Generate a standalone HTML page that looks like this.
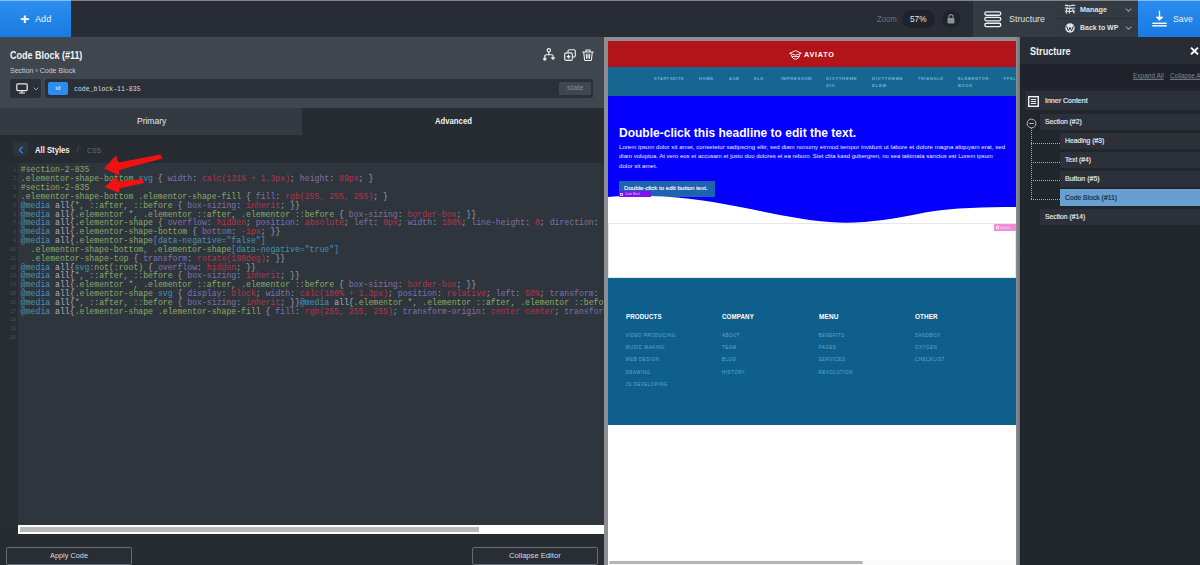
<!DOCTYPE html>
<html><head><meta charset="utf-8">
<style>
*{box-sizing:border-box;margin:0;padding:0}
html,body{width:1200px;height:565px;overflow:hidden;background:#21252c;font-family:"Liberation Sans",sans-serif;color:#fff}
.abs,.t{position:absolute}
.t{white-space:nowrap;line-height:1;transform:translateY(-50%) scaleX(var(--sx,1));transform-origin:left center}
svg{position:absolute;overflow:visible}
#top{position:absolute;left:0;top:0;width:1200px;height:37px;background:#282c34}
#topline{position:absolute;left:0;top:0;width:1200px;height:1px;background:rgba(255,255,255,.42)}
#add{position:absolute;left:0;top:0;width:71px;height:37px;background:linear-gradient(#2d8ff0,#1a7ae0)}
#left{position:absolute;left:0;top:37px;width:604px;height:528px;background:#272b32}
#hdr{position:absolute;left:0;top:0;width:604px;height:70.5px;background:#3f464e}
#tabs{position:absolute;left:0;top:70.5px;width:604px;height:27.2px}
#tabs div{position:absolute;top:0;height:27.2px;width:302px}
#code{position:absolute;left:0;top:126px;width:604px;height:362px;background:#2f353d;overflow:hidden}
#gutter{position:absolute;left:0;top:0;width:18px;height:400px;background:#282c33}
pre{position:absolute;left:20.8px;top:3.4px;font-family:"Liberation Mono",monospace;font-size:8.17px;line-height:8.83px;color:#9ba3ab;white-space:pre}
pre.ln{left:0;width:16px;text-align:right;color:#4d545c;font-size:6px}
.g{color:#8aaa66}.b{color:#4592b5}.p{color:#8070ab}.r{color:#b8334a}.w{color:#a9b0b8}.c{color:#4aa0b8}
#right{position:absolute;left:1020px;top:37px;width:180px;height:528px;background:#21252c}
#prev{position:absolute;left:604px;top:37px;width:416px;height:528px;background:linear-gradient(90deg,#8c8e92 0,#8c8e92 412px,#6c7178 416px)}
#page{position:absolute;left:4px;top:4px;width:408px;height:524px;background:#fff;overflow:hidden}
.btn{position:absolute;height:18px;border:1px solid #676d75;border-radius:2px;background:#292d34}
.row{position:absolute;height:16px;background:#2c3139;right:0}
.lo{font-size:6px;color:#ececff}
.rt{font-size:7.8px;color:#e3e6e9;-webkit-text-stroke:.2px currentColor}
.nav{transform-origin:left center;transform:scaleX(var(--sx,1));font-size:3.9px;font-weight:bold;letter-spacing:.6px;color:#66b8d8;line-height:7px;position:absolute;white-space:nowrap}
.fh{position:absolute;transform-origin:left center;transform:scaleX(var(--sx,1));font-size:6.6px;font-weight:bold;color:#fff;white-space:nowrap;letter-spacing:.1px}
.fl{position:absolute;font-size:4.5px;color:#62abd0;white-space:nowrap;letter-spacing:.5px}
</style></head><body>
<div id="top">
 <div id="add"><span class="t" id="t_plus" style="--sx:1.148;left:20px;top:19px;font-size:14px;font-weight:bold;color:#fff">+</span><span class="t" id="t_add" style="--sx:0.977;left:35px;top:19.3px;font-size:9.4px;color:#e6f0fc">Add</span></div>
 <span class="t" id="t_zoom" style="--sx:0.911;left:877px;top:19px;font-size:8.5px;color:#6c737c">Zoom</span>
 <div class="abs" style="left:902px;top:10px;width:33px;height:18px;border-radius:9px;background:#1f222a"></div>
 <span class="t" id="t_57" style="--sx:0.965;left:910px;top:19.3px;font-size:8.6px;color:#e6e8ea">57%</span>
 <div class="abs" style="left:942px;top:10px;width:18px;height:18px;border-radius:9px;background:#20242b"></div>
 <svg style="left:947px;top:14px" width="8" height="10" viewBox="0 0 8 10"><rect x="0.5" y="4" width="7" height="5.5" rx=".8" fill="#8b9199"/><path d="M2 4V2.6a2 2 0 0 1 4 0V4" fill="none" stroke="#8b9199" stroke-width="1.1"/></svg>
 <div class="abs" style="left:973px;top:1px;width:83px;height:36px;background:#353b43"></div>
 <svg style="left:984px;top:10.5px" width="18" height="17" viewBox="0 0 18 17"><g fill="none" stroke="#eef0f2" stroke-width="1.35"><rect x=".8" y=".8" width="16" height="3.4" rx="1.7"/><rect x=".8" y="6.4" width="16" height="3.4" rx="1.7"/><rect x=".8" y="12.2" width="16" height="3.4" rx="1.7"/></g></svg>
 <span class="t" id="t_struct" style="--sx:0.966;left:1009px;top:19.5px;font-size:9.2px;color:#dde1e5">Structure</span>
 <div class="abs" style="left:1056px;top:1px;width:82px;height:36px;background:#343a42"></div>
 <div class="abs" style="left:1056px;top:18px;width:82px;height:1px;background:#2a2f36"></div>
 <svg style="left:1064px;top:4px" width="12" height="11" viewBox="0 0 12 11"><g fill="none" stroke="#e6e9ec" stroke-width="1.05"><path d="M.8 1.4c2.2-1 3.2.9 5.4.4s2.600-1.200 5-.4"/><path d="M.8 4.300c2.200-1 3.200.9 5.400.4s2.600-1.200 5-.4"/><path d="M.8 7.200c2.200-1 3.200.9 5.400.4s2.600-1.200 5-.4"/><path d="M3.200 2.500L2.200 9.800M6 3l-.8 6.600M8.600 5l1.600 4.600"/></g></svg>
 <span class="t" id="t_manage" style="--sx:0.906;left:1079.7px;top:10.3px;font-size:8px;font-weight:bold;color:#dfe3e7">Manage</span>
 <svg style="left:1124.5px;top:8px" width="7" height="4" viewBox="0 0 7 4"><path d="M.7.6l2.8 2.6L6.3.6" fill="none" stroke="#8f959d" stroke-width="1.1"/></svg>
 <svg style="left:1064.5px;top:23px" width="10" height="10" viewBox="0 0 10 10"><circle cx="5" cy="5" r="4.7" fill="#dfe2e6"/><path d="M1.6 3.2l1.9 4.6L5 4.3l1.5 3.5 1.9-4.6" fill="none" stroke="#343a42" stroke-width="1"/></svg>
 <span class="t" id="t_back" style="--sx:0.870;left:1079.7px;top:28.2px;font-size:8px;font-weight:bold;color:#dfe3e7">Back to WP</span>
 <svg style="left:1124.5px;top:26.3px" width="7" height="4" viewBox="0 0 7 4"><path d="M.7.6l2.8 2.6L6.3.6" fill="none" stroke="#8f959d" stroke-width="1.1"/></svg>
 <div class="abs" style="left:1138px;top:0;width:62px;height:37px;background:linear-gradient(#2b8cf0,#1a7ae0)"></div>
 <svg style="left:1152px;top:10px" width="15" height="17" viewBox="0 0 15 17"><g stroke="#fff" fill="none"><path d="M7.5.6v9" stroke-width="1.3"/><path d="M4 7l3.5 3.6L11 7z" fill="#fff" stroke-width=".6"/><path d="M.3 13.3h14.4" stroke-width="1.4"/><path d="M.3 15.8h14.4" stroke-width="1.4"/></g></svg>
 <span class="t" id="t_save" style="--sx:0.950;left:1172.7px;top:20.1px;font-size:9.2px;color:#e4effc">Save</span>
 <div id="topline"></div>
</div>

<div id="left">
 <div id="hdr">
  <span class="t" id="t_title" style="--sx:0.898;left:10px;top:18.6px;font-size:10px;font-weight:bold;color:#f2f3f4">Code Block (#11)</span>
  <span class="t" id="t_crumb" style="--sx:1.035;left:10px;top:33.6px;font-size:6.8px;color:#c9cdd2">Section › Code Block</span>
  <svg style="left:543px;top:11px" width="13" height="13" viewBox="0 0 13 13"><g fill="none" stroke="#f0f1f2" stroke-width="1.15"><circle cx="5.8" cy="2.3" r="1.7"/><path d="M5.8 4v2.7M1.8 9.6V8a1.3 1.3 0 0 1 1.3-1.3h5.6A1.3 1.3 0 0 1 10 8v2.6M8.2 9.4L10 11.2l1.8-1.8"/><circle cx="1.8" cy="11" r="1.1" fill="#f0f1f2"/></g></svg>
  <svg style="left:564px;top:12px" width="12" height="12" viewBox="0 0 12 12"><g fill="none" stroke="#f0f1f2" stroke-width="1.15"><rect x=".7" y="3.8" width="7.6" height="7.6" rx="1.5"/><path d="M4 3.6V2.2A1.5 1.5 0 0 1 5.5.7h4.3a1.5 1.5 0 0 1 1.5 1.5v4.3A1.5 1.5 0 0 1 9.8 8H8.5"/><path d="M4.5 5.8v3.6M2.7 7.6h3.6" stroke-width="1.3"/></g></svg>
  <svg style="left:582px;top:12px" width="12" height="12" viewBox="0 0 12 12"><g fill="none" stroke="#f0f1f2" stroke-width="1.1"><path d="M.4 3h11.2M4 2.8V1h4v1.8M1.7 3.2l.9 7.6a.8.8 0 0 0 .8.7h5.2a.8.8 0 0 0 .8-.7l.9-7.6M4.3 4.8l.3 4.8M6 4.8v4.8M7.7 4.8l-.3 4.8"/></g></svg>
  <div class="abs" style="left:10px;top:41.5px;width:31px;height:19px;background:#2b3038;border-radius:2px"></div>
  <svg style="left:16px;top:45.6px" width="12" height="11" viewBox="0 0 12 11"><g fill="none" stroke="#eceef0" stroke-width="1.2"><rect x=".8" y=".8" width="10.4" height="6.8" rx="1"/><path d="M3 10h6M6 7.6V10"/></g></svg>
  <svg style="left:32.5px;top:49.6px" width="6" height="4" viewBox="0 0 6 4"><path d="M.6.6L3 2.9 5.4.6" fill="none" stroke="#9aa0a8" stroke-width="1"/></svg>
  <div class="abs" style="left:45px;top:41.5px;width:548px;height:19px;background:#2b3038;border-radius:2px"></div>
  <div class="abs" style="left:48px;top:44.7px;width:20px;height:13px;background:#2c8def;border-radius:2px"></div>
  <span class="t" id="t_id" style="left:55.5px;top:52.4px;font-size:5.5px;font-weight:bold;color:#cfe5fd">id</span>
  <span class="t" id="t_cid" style="--sx:1.021;left:74px;top:53px;font-size:6.4px;color:#d6dadf;font-family:'Liberation Mono',monospace">code_block-11-835</span>
  <div class="abs" style="left:559px;top:44.7px;width:32px;height:13px;background:#3f4852;border-radius:1px"></div>
  <span class="t" id="t_state" style="--sx:1.154;left:567px;top:51.4px;font-size:6.6px;color:#7f8a96">state</span>
 </div>
 <div id="tabs"><div style="left:0;background:#333a42"></div><div style="left:302px;background:#272b32"></div>
  <span class="t" id="t_primary" style="--sx:0.986;left:136.5px;top:13.4px;font-size:8.6px;color:#e8eaec">Primary</span>
  <span class="t" id="t_adv" style="--sx:0.898;left:434.6px;top:13.4px;font-size:8.6px;color:#f1f2f3;font-weight:bold">Advanced</span>
 </div>
 <div class="abs" style="left:13px;top:105px;width:14.5px;height:14px;background:#2e343c;border-radius:2px"></div>
 <svg style="left:17.5px;top:108.5px" width="6" height="8" viewBox="0 0 6 8"><path d="M4.6.8L1.4 4l3.2 3.2" fill="none" stroke="#2f80d6" stroke-width="1.5"/></svg>
 <span class="t" id="t_all" style="--sx:0.938;left:35px;top:113.6px;font-size:8.2px;font-weight:bold;color:#f1f2f3">All Styles</span>
 <span class="t" style="left:76.5px;top:113.6px;font-size:8.2px;color:#4f565e">/</span>
 <span class="t" id="t_css" style="--sx:0.851;left:86.7px;top:113.6px;font-size:8px;color:#68707a">CSS</span>
 <div id="code"><div id="gutter"></div>
<pre class="ln" style="font-size:5px">1
2
3
4
5
6
7
8
9
10
11
12
13
14
15
16
17
18
19
20</pre>
<pre id="src"><span class="g">#section-2-835</span>
<span class="g">.elementor-shape-bottom</span> <span class="b">svg</span> { <span class="p">width</span>: <span class="r">calc(131% + 1.3px)</span>; <span class="p">height</span>: <span class="r">89px</span>; }
<span class="g">#section-2-835</span>
<span class="g">.elementor-shape-bottom .elementor-shape-fill</span> { <span class="p">fill</span>: <span class="r">rgb(255, 255, 255)</span>; }
<span class="b">@media</span> <span class="w">all{</span><span class="g">*, ::after, ::before</span> { <span class="p">box-sizing</span>: <span class="r">inherit</span>; }}
<span class="b">@media</span> <span class="w">all{</span><span class="g">.elementor *, .elementor ::after, .elementor ::before</span> { <span class="p">box-sizing</span>: <span class="r">border-box</span>; }}
<span class="b">@media</span> <span class="w">all{</span><span class="g">.elementor-shape</span> { <span class="p">overflow</span>: <span class="r">hidden</span>; <span class="p">position</span>: <span class="r">absolute</span>; <span class="p">left</span>: <span class="r">0px</span>; <span class="p">width</span>: <span class="r">100%</span>; <span class="p">line-height</span>: <span class="r">0</span>; <span class="p">direction</span>: <span class="r">ltr</span>; }}
<span class="b">@media</span> <span class="w">all{</span><span class="g">.elementor-shape-bottom</span> { <span class="p">bottom</span>: <span class="r">-1px</span>; }}
<span class="b">@media</span> <span class="w">all{</span><span class="g">.elementor-shape</span><span class="b">[data-negative="false"]</span>
  <span class="g">.elementor-shape-bottom, .elementor-shape</span><span class="b">[data-negative="true"]</span>
  <span class="g">.elementor-shape-top</span> { <span class="p">transform</span>: <span class="r">rotate(180deg)</span>; }}
<span class="b">@media</span> <span class="w">all{</span><span class="b">svg</span><span class="g">:not(:root)</span> { <span class="p">overflow</span>: <span class="r">hidden</span>; }}
<span class="b">@media</span> <span class="w">all{</span><span class="g">*, ::after, ::before</span> { <span class="p">box-sizing</span>: <span class="r">inherit</span>; }}
<span class="b">@media</span> <span class="w">all{</span><span class="g">.elementor *, .elementor ::after, .elementor ::before</span> { <span class="p">box-sizing</span>: <span class="r">border-box</span>; }}
<span class="b">@media</span> <span class="w">all{</span><span class="g">.elementor-shape</span> <span class="b">svg</span> { <span class="p">display</span>: <span class="r">block</span>; <span class="p">width</span>: <span class="r">calc(100% + 1.3px)</span>; <span class="p">position</span>: <span class="r">relative</span>; <span class="p">left</span>: <span class="r">50%</span>; <span class="p">transform</span>: <span class="r">translateX(-50%)</span>; }}
<span class="b">@media</span> <span class="w">all{</span><span class="g">*, ::after, ::before</span> { <span class="p">box-sizing</span>: <span class="r">inherit</span>; }}<span class="b">@media</span> <span class="w">all{</span><span class="g">.elementor *, .elementor ::after, .elementor ::before</span> { <span class="p">box-sizing</span>: <span class="r">border-box</span>; }}
<span class="b">@media</span> <span class="w">all{</span><span class="g">.elementor-shape .elementor-shape-fill</span> { <span class="p">fill</span>: <span class="r">rgb(255, 255, 255)</span>; <span class="p">transform-origin</span>: <span class="r">center center</span>; <span class="p">transform</span>: <span class="r">rotateY(0deg)</span>; }}
</pre>
 </div>
 <svg style="left:0;top:0" width="604" height="300" viewBox="0 37 604 300"><g fill="#f01212"><path d="M104 168.4L116 155.5l2.5 7L160.5 154.6l2 4L119 170l.5 5.4z"/><path d="M104.3 186.9L117 176.5l1.5 5L143 179l1 4-24.8 5.6.3 4.4z"/></g></svg>
 <div class="abs" style="left:18px;top:488px;width:586px;height:9px;background:#fff"></div>
 <div class="abs" style="left:20px;top:489.7px;width:459px;height:5.8px;background:#b9b9b9"></div>
 <div class="btn" style="left:6px;top:510px;width:126px"></div>
 <span class="t" id="t_apply" style="--sx:0.994;left:50px;top:519px;font-size:7.4px;color:#d9dce0">Apply Code</span>
 <div class="btn" style="left:472px;top:510px;width:126px"></div>
 <span class="t" id="t_coll" style="--sx:1.031;left:509px;top:519px;font-size:7.4px;color:#d9dce0">Collapse Editor</span>
</div>

<div id="prev"><div id="page">
 <div class="abs" style="left:0;top:0;width:408px;height:26px;background:#b21419"></div>
 <svg style="left:180.5px;top:8.8px" width="13" height="10" viewBox="0 0 13 10"><g fill="none" stroke="#fff" stroke-width=".9"><path d="M6.5.6L12.3 3.4 6.5 5.2.7 3.4z"/><path d="M2.2 4.6C2.6 7.6 4.5 9.2 6.5 9.2s3.9-1.6 4.3-4.6"/><path d="M3 6.6h7"/></g></svg>
 <span class="t" id="t_aviato" style="--sx:1.092;left:196px;top:14.3px;font-size:6.6px;font-weight:bold;letter-spacing:.7px;color:#fff">AVIATO</span>
 <div class="abs" style="left:0;top:26px;width:408px;height:29px;background:#176591"></div>
 <span class="nav" id="n1" style="--sx:1.013;left:46px;top:33.7px">STARTSEITE</span>
 <span class="nav" id="n2" style="--sx:1.065;left:91px;top:33.7px">HOME</span>
 <span class="nav" id="n3" style="--sx:0.995;left:120.6px;top:33.7px">AGB</span>
 <span class="nav" id="n4" style="--sx:1.034;left:145.6px;top:33.7px">ELE ·</span>
 <span class="nav" id="n5" style="--sx:1.077;left:172.8px;top:33.7px">IMPRESSUM</span>
 <span class="nav" id="n6" style="--sx:1.114;left:218px;top:33.7px">DIVYTHEME<br>DIV</span>
 <span class="nav" id="n7" style="--sx:1.114;left:264px;top:33.7px">DIVYTHEME<br>ELEM</span>
 <span class="nav" id="n8" style="--sx:1.037;left:310px;top:33.7px">TRIANGLE</span>
 <span class="nav" id="n9" style="--sx:1.048;left:350px;top:33.7px">ELEMENTOR<br>BOOK</span>
 <span class="nav" id="n10" style="left:395.6px;top:33.7px">PPEL</span>
 <div class="abs" style="left:0;top:55px;width:408px;height:130px;background:#0400fc"></div>
 <span class="t" id="t_head" style="--sx:0.970;left:11px;top:91.8px;font-size:12.4px;font-weight:bold;color:#fff">Double-click this headline to edit the text.</span>
 <span class="t lo" id="l1" style="--sx:1.019;left:11px;top:106.2px">Lorem ipsum dolor sit amet, consetetur sadipscing elitr, sed diam nonumy eirmod tempor invidunt ut labore et dolore magna aliquyam erat, sed</span>
 <span class="t lo" id="l2" style="--sx:0.998;left:11px;top:115.4px">diam voluptua. At vero eos et accusam et justo duo dolores et ea rebum. Stet clita kasd gubergren, no sea takimata sanctus est Lorem ipsum</span>
 <span class="t lo" id="l3" style="--sx:1.019;left:11px;top:124.7px">dolor sit amet.</span>
 <div class="abs" style="left:11px;top:140px;width:95.5px;height:15.6px;background:#1e62b0"></div>
 <span class="t" id="t_btn" style="--sx:1.020;left:16px;top:146.9px;font-size:6px;color:#fff;-webkit-text-stroke:.12px #fff">Double-click to edit button text.</span>
 <svg style="left:0;top:150px" width="408" height="40" viewBox="608 191 408 40"><path d="M608 196.9C622 195.6 640 195.2 664 196.6C700 198.8 730 205 770 213C800 219 825 222.8 846 222.8C870 222.8 895 218.5 925 212.5C955 207.5 985 207 1016 207V232H608z" fill="#fff"/></svg>
 <div class="abs" style="left:11px;top:150.4px;width:31.5px;height:5.2px;background:#7d10ee"></div>
 <span class="t" id="t_cb" style="left:17px;top:152.9px;font-size:2.8px;color:#e9d4ff;letter-spacing:.1px">Code Block</span>
 <div class="abs" style="left:12.4px;top:151.5px;width:3px;height:3px;border:.5px solid #d9b5ff"></div>
 <div class="abs" style="left:0;top:182px;width:408px;height:54.6px;border:1px solid #e6e6e6"></div>
 <div class="abs" style="left:386px;top:183px;width:22px;height:7px;background:#ee8fd8"></div>
 <span class="t" id="t_sec" style="left:392.5px;top:186.6px;font-size:2.8px;color:#fde8f8">Section</span>
 <div class="abs" style="left:387.6px;top:185px;width:3px;height:3px;border:.5px solid #fde8f8"></div>
 <div class="abs" style="left:0;top:236.6px;width:408px;height:147.4px;background:#0f5f8c"></div>
 <span class="fh" id="f1" style="--sx:0.944;left:17.5px;top:271.6px">PRODUCTS</span>
 <span class="fh" id="f2" style="--sx:0.940;left:114px;top:271.6px">COMPANY</span>
 <span class="fh" id="f3" style="--sx:0.983;left:210.5px;top:271.6px">MENU</span>
 <span class="fh" id="f4" style="--sx:0.963;left:307px;top:271.6px">OTHER</span>
 <span class="fl" style="left:17.5px;top:291.6px">VIDEO PRODUCING</span>
 <span class="fl" style="left:17.5px;top:304.0px">MUSIC MAKING</span>
 <span class="fl" style="left:17.5px;top:316.4px">WEB DESIGN</span>
 <span class="fl" style="left:17.5px;top:328.8px">DRAWING</span>
 <span class="fl" style="left:17.5px;top:341.2px">JS DEVELOPING</span>
 <span class="fl" style="left:114px;top:291.6px">ABOUT</span>
 <span class="fl" style="left:114px;top:304.0px">TEAM</span>
 <span class="fl" style="left:114px;top:316.4px">BLOG</span>
 <span class="fl" style="left:114px;top:328.8px">HISTORY</span>
 <span class="fl" style="left:210.5px;top:291.6px">BENEFITS</span>
 <span class="fl" style="left:210.5px;top:304.0px">PAGES</span>
 <span class="fl" style="left:210.5px;top:316.4px">SERVICES</span>
 <span class="fl" style="left:210.5px;top:328.8px">REVOLUTION</span>
 <span class="fl" style="left:307px;top:291.6px">SANDBOX</span>
 <span class="fl" style="left:307px;top:304.0px">OXYGEN</span>
 <span class="fl" style="left:307px;top:316.4px">CHECKLIST</span>
 <div class="abs" style="left:0;top:519px;width:408px;height:5px;background:#fbfbfb"></div>
 <div class="abs" style="left:1px;top:520px;width:254px;height:3px;background:#b5b5b5;border-radius:1.5px"></div>
</div></div>

<div id="right">
 <div class="abs" style="left:0;top:0;width:180px;height:27px;background:#282c34"></div>
 <span class="t" id="t_struct2" style="--sx:0.877;left:9.5px;top:14.6px;font-size:10.4px;font-weight:bold;color:#f1f2f3">Structure</span>
 <svg style="left:169.5px;top:10px" width="9" height="8" viewBox="0 0 9 8"><path d="M1 .6l7 6.8M8 .6L1 7.4" stroke="#fff" stroke-width="2" fill="none"/></svg>
 <div class="abs" style="left:0;top:27px;width:180px;height:24px;background:#1f222a"></div>
 <span class="t" id="t_exp" style="--sx:1.016;left:113px;top:39px;font-size:6.4px;color:#7f868f;text-decoration:underline">Expand All</span>
 <span class="t" id="t_col" style="left:150px;top:39px;font-size:6.4px;color:#7f868f;text-decoration:underline">Collapse All</span>
 <div class="row" style="left:5px;top:54px;height:19px"></div>
 <svg style="left:8px;top:59px" width="11" height="11" viewBox="0 0 11 11"><g fill="none" stroke="#f0f1f2"><rect x=".7" y=".7" width="9.6" height="9.6" stroke-width="1.4"/><path d="M2.8 3.5h5.4M2.8 5.5h5.4M2.8 7.5h5.4" stroke-width="1"/></g></svg>
 <span class="t rt" id="r0" style="--sx:0.902;left:25.4px;top:64px">Inner Content</span>
 <svg style="left:5.5px;top:80.5px" width="11" height="11" viewBox="0 0 11 11"><circle cx="5.5" cy="5.5" r="4.4" fill="#21252c" stroke="#b9bdc2" stroke-width="1"/><path d="M3.2 5.5h4.6" stroke="#b9bdc2" stroke-width="1"/></svg>
 <div class="abs" style="left:10.5px;top:91px;width:0;height:71px;border-left:1px dotted #a9adb3"></div>
 <div class="abs" style="left:11px;top:105.5px;width:29px;height:0;border-top:1px dotted #a9adb3"></div>
 <div class="abs" style="left:11px;top:124.5px;width:29px;height:0;border-top:1px dotted #a9adb3"></div>
 <div class="abs" style="left:11px;top:142.5px;width:29px;height:0;border-top:1px dotted #a9adb3"></div>
 <div class="abs" style="left:11px;top:161.5px;width:29px;height:0;border-top:1px dotted #a9adb3"></div>
 <div class="row" style="left:20px;top:77px"></div><span class="t rt" id="r1" style="--sx:0.873;left:25px;top:85.3px">Section (#2)</span>
 <div class="row" style="left:40px;top:96px"></div><span class="t rt" id="r2" style="--sx:0.872;left:45px;top:104.3px">Heading (#3)</span>
 <div class="row" style="left:40px;top:115px"></div><span class="t rt" id="r3" style="--sx:0.857;left:45px;top:123.3px">Text (#4)</span>
 <div class="row" style="left:40px;top:134px"></div><span class="t rt" id="r4" style="--sx:0.899;left:45px;top:142.3px">Button (#5)</span>
 <div class="row" style="left:40px;top:152px;height:17px;background:#679fd1"></div><span class="t rt" id="r5" style="--sx:0.871;left:45px;top:160.6px;color:#14304c">Code Block (#11)</span>
 <div class="row" style="left:20px;top:171.5px"></div><span class="t rt" id="r6" style="--sx:0.867;left:25px;top:179.8px">Section (#14)</span>
</div>
</body></html>
